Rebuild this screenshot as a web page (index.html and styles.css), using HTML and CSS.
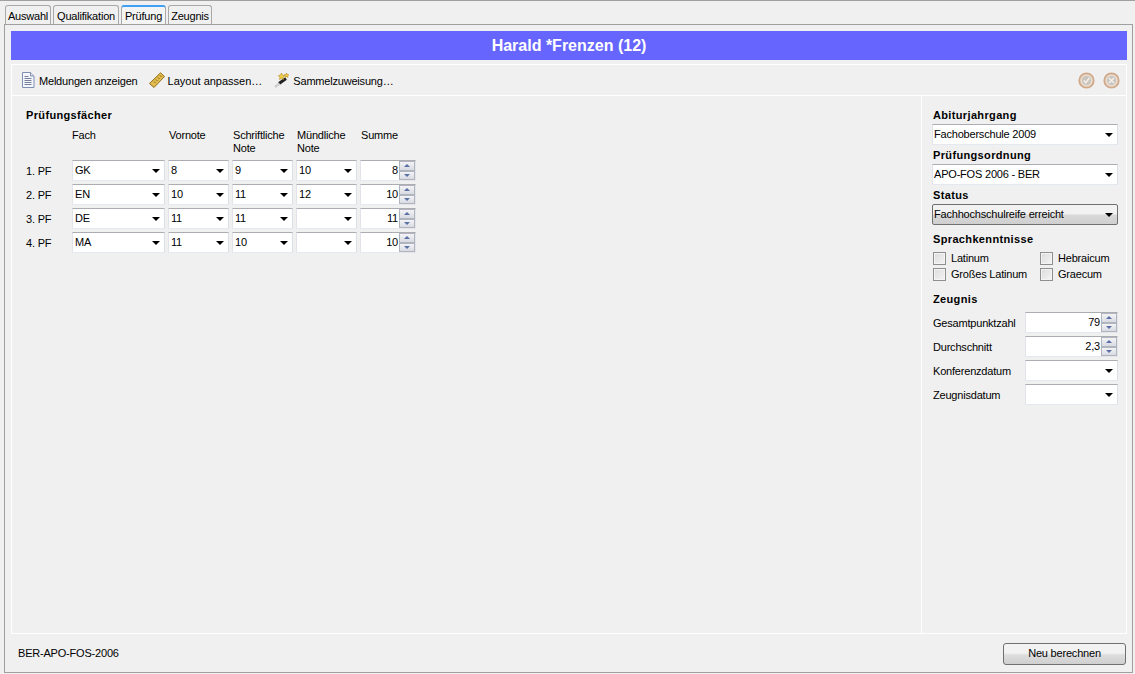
FILE: index.html
```html
<!DOCTYPE html>
<html lang="de">
<head>
<meta charset="utf-8">
<title>Prüfung</title>
<link rel="stylesheet" href="styles.css">
</head>
<body>
<nav class="tabs">
  <div class="tab tab-a">Auswahl</div>
  <div class="tab tab-q">Qualifikation</div>
  <div class="tab tab-p active">Prüfung</div>
  <div class="tab tab-z">Zeugnis</div>
</nav>
<div class="panel">
  <h1 class="title">Harald *Frenzen (12)</h1>
  <div class="main">
    <div class="toolbar">
      <div class="tool tool-m">
        <svg width="14" height="16" viewBox="0 0 14 16"><path d="M1.500.5h8l3.500 3.500v11.500h-11.500z" fill="#f4f6fb" stroke="#7f8fb4"/><path d="M9.500.5v3.500h3.500" fill="#dfe5f2" stroke="#7f8fb4"/><path d="M3.500 6.500h7M3.500 8.500h7M3.500 10.500h7M3.500 12.500h7M3.500 4.500h4" stroke="#76809a"/></svg>
        <span>Meldungen anzeigen</span>
      </div>
      <div class="tool tool-l">
        <svg width="16" height="16" viewBox="0 0 16 16"><path d="M11.500.8l4 3.700-10.500 11-4.500-4z" fill="#e2bd4e" stroke="#8f6d1c" stroke-linejoin="round"/><path d="M11 3.500l1.500 1.500M9 5.500l1.500 1.500M7 7.500l1.500 1.500M5 9.500l1.500 1.500" stroke="#7c5d14"/></svg>
        <span>Layout anpassen…</span>
      </div>
      <div class="tool tool-s">
        <svg width="15" height="16" viewBox="0 0 15 16"><path d="M5 11.500L12 6.500" stroke="#222" stroke-width="3"/><path d="M1 15l4.500-3.500" stroke="#cfcfcf" stroke-width="2.600"/><path d="M7.500 1l1 2.200 2.200.4-1.600 1.600.4 2.300-2-1.100-2 1.100.4-2.300L4.300 3.600l2.200-.4zM12.500 1l.8 1.500 1.500.3-1.100 1.100.2 1.500-1.400-.7-1.400.7.200-1.500-1.100-1.100 1.500-.3z" fill="#f2cf45" stroke="#b48a1d" stroke-width=".6"/></svg>
        <span>Sammelzuweisung…</span>
      </div>
      <div class="round-icons">
        <svg width="17" height="17" viewBox="0 0 17 17"><circle cx="8.500" cy="8.500" r="7.200" fill="#e9dccf" stroke="#cfa98a" stroke-width="1.800"/><circle cx="8.500" cy="8.500" r="4.500" fill="#c9c4be"/><path d="M5.800 8.500l2 2.300 3.500-4.800" fill="none" stroke="#f2eee9" stroke-width="1.600"/></svg>
        <svg width="17" height="17" viewBox="0 0 17 17"><circle cx="8.500" cy="8.500" r="7.200" fill="#e9dccf" stroke="#cfa98a" stroke-width="1.800"/><circle cx="8.500" cy="8.500" r="4.500" fill="#c9c4be"/><path d="M6 6l5 5M11 6l-5 5" stroke="#f2eee9" stroke-width="1.700"/></svg>
      </div>
    </div>
    <div class="content">
      <section class="subjects">
        <h2 class="heading">Prüfungsfächer</h2>
        <div class="grid">
          <div class="head"></div>
          <div class="head head-first">Fach</div>
          <div class="head">Vornote</div>
          <div class="head">Schriftliche<br>Note</div>
          <div class="head">Mündliche<br>Note</div>
          <div class="head">Summe</div>

          <div class="row-label">1. PF</div>
          <div class="combo">GK</div><div class="combo">8</div><div class="combo">9</div><div class="combo">10</div>
          <div class="spin"><div class="spin-value">8</div><div class="spin-btns"><i class="up"></i><i class="down"></i></div></div>

          <div class="row-label">2. PF</div>
          <div class="combo">EN</div><div class="combo">10</div><div class="combo">11</div><div class="combo">12</div>
          <div class="spin"><div class="spin-value">10</div><div class="spin-btns"><i class="up"></i><i class="down"></i></div></div>

          <div class="row-label">3. PF</div>
          <div class="combo">DE</div><div class="combo">11</div><div class="combo">11</div><div class="combo"></div>
          <div class="spin"><div class="spin-value">11</div><div class="spin-btns"><i class="up"></i><i class="down"></i></div></div>

          <div class="row-label">4. PF</div>
          <div class="combo">MA</div><div class="combo">11</div><div class="combo">10</div><div class="combo"></div>
          <div class="spin"><div class="spin-value">10</div><div class="spin-btns"><i class="up"></i><i class="down"></i></div></div>
        </div>
      </section>
      <aside class="side">
        <h2 class="heading">Abiturjahrgang</h2>
        <div class="combo">Fachoberschule 2009</div>
        <h2 class="heading">Prüfungsordnung</h2>
        <div class="combo">APO-FOS 2006 - BER</div>
        <h2 class="heading">Status</h2>
        <div class="combo combo-btn">Fachhochschulreife erreicht</div>
        <h2 class="heading heading-lang">Sprachkenntnisse</h2>
        <div class="checks">
          <label class="check"><i class="box"></i>Latinum</label>
          <label class="check"><i class="box"></i>Hebraicum</label>
          <label class="check"><i class="box"></i>Großes Latinum</label>
          <label class="check"><i class="box"></i>Graecum</label>
        </div>
        <h2 class="heading heading-zeugnis">Zeugnis</h2>
        <div class="form">
          <div>Gesamtpunktzahl</div>
          <div class="spin"><div class="spin-value">79</div><div class="spin-btns"><i class="up"></i><i class="down"></i></div></div>
          <div>Durchschnitt</div>
          <div class="spin"><div class="spin-value">2,3</div><div class="spin-btns"><i class="up"></i><i class="down"></i></div></div>
          <div>Konferenzdatum</div>
          <div class="combo"></div>
          <div>Zeugnisdatum</div>
          <div class="combo"></div>
        </div>
      </aside>
    </div>
  </div>
  <footer class="footer">
    <span>BER-APO-FOS-2006</span>
    <button class="button" type="button">Neu berechnen</button>
  </footer>
</div>
</body>
</html>
```
FILE: styles.css
```css
* { box-sizing: border-box; }
html, body { margin: 0; height: 100%; }
body {
  width: 1135px;
  height: 674px;
  overflow: hidden;
  background: #f0f0f0;
  border-top: 1px solid #a0a0a0;
  padding: 4px 2px 1px 4px;
  font: 11px/13px "Liberation Sans", Arial, sans-serif;
  letter-spacing: -0.2px;
  color: #000;
  display: flex;
  flex-direction: column;
}
.tabs { display: flex; height: 19px; padding-left: 1px; gap: 2px; }
.tab {
  border: 1px solid #a9a9a9;
  border-bottom: 0;
  border-radius: 3px 3px 0 0;
  background: #f0f0f0;
  text-align: center;
  padding-top: 2px;
  line-height: 17px;
  white-space: nowrap;
}
.tab-a { width: 46px; }
.tab-q { width: 66px; }
.tab-p { width: 45px; }
.tab-z { width: 44px; }
.active { background: #f4f4f4; border-top: 2px solid #3fa0f5; border-color: #3fa0f5 #a9a9a9 #a9a9a9; padding-top: 1px; }
.panel {
  flex: 1;
  border: 1px solid #a0a0a0;
  padding: 6px 5px 0 6px;
  display: flex;
  flex-direction: column;
}
.title {
  margin: 0;
  height: 29px;
  flex: none;
  background: #6666ff;
  color: #fff;
  font: bold 16px/29px "Liberation Sans", sans-serif;
  letter-spacing: 0;
  text-align: center;
}
.main {
  margin-top: 4px;
  flex: 1;
  border: 1px solid #fff;
  display: flex;
  flex-direction: column;
  min-height: 0;
}
.toolbar {
  height: 31px;
  flex: none;
  border-bottom: 1px solid #fff;
  display: flex;
  align-items: center;
  padding-left: 9px;
}
.tool { display: flex; align-items: center; gap: 4px; }
.tool span { padding-top: 2px; }
.tool-l { margin-left: 11px; gap: 3px; letter-spacing: 0; }
.tool-s { margin-left: 12px; gap: 4px; }
.round-icons { margin-left: auto; margin-right: 6px; display: flex; gap: 8px; }
.content { flex: 1; display: flex; min-height: 0; }
.subjects { flex: 1; padding: 12px 0 0 14px; border-right: 1px solid #fff; }
.heading {
  margin: 0;
  font-size: 11px;
  font-weight: bold;
  line-height: 15px;
  letter-spacing: 0.35px;
}
.grid {
  display: grid;
  grid-template-columns: 43px 93px 61px 61px 61px 56px;
  grid-auto-rows: 21px;
  grid-template-rows: 29px;
  column-gap: 3px;
  row-gap: 3px;
  margin-top: 5px;
}
.grid .combo { padding-left: 2px; }
.head { padding: 1px 0 0 1px; margin-bottom: -3px; }
.head-first { padding-left: 0; }
.row-label { align-self: center; padding-top: 1px; }
.combo {
  position: relative;
  height: 21px;
  background: #fff;
  border: 1px solid;
  border-color: #abadb3 #dbdfe6 #e3e9ef #e2e3ea;
  line-height: 18px;
  padding-left: 1px;
  white-space: nowrap;
}
.combo::after {
  content: "";
  position: absolute;
  right: 4px;
  top: 8px;
  border: 4px solid transparent;
  border-top: 4px solid #000;
  border-bottom: 0;
}
.combo-btn {
  border: 1px solid #707070;
  border-radius: 2px;
  background: linear-gradient(#f2f2f2 0 45%, #d8d8d8 55%, #cfcfcf);
}
.spin { display: flex; height: 21px; }
.spin-value {
  flex: 1;
  background: #fff;
  border: 1px solid;
  border-color: #abadb3 #dbdfe6 #e3e9ef #e2e3ea;
  border-right: 0;
  text-align: right;
  padding-right: 1px;
  line-height: 18px;
}
.spin-btns { width: 17px; display: flex; flex-direction: column; background: #fff; border: 1px solid #e3e5ea; border-left: 0; border-top-color: #abadb3; }
.spin-btns i {
  flex: 1;
  position: relative;
  border: 1px solid #b0b4be;
  background: linear-gradient(#f4f4f6, #d8dbe2);
}
.spin-btns i::after {
  content: "";
  position: absolute;
  left: 4px;
  top: 2px;
  border: 3px solid transparent;
  border-top: 0;
  border-bottom: 3px solid #5a6ea8;
}
.spin-btns .down::after { border-bottom: 0; border-top: 3px solid #5a6ea8; }
.side { width: 204px; flex: none; padding: 12px 8px 0 10px; }
.side .heading { margin-left: 1px; margin-bottom: 1px; }
.side .combo + .heading { margin-top: 3px; }
.side .combo + .heading-lang { margin-top: 7px; margin-bottom: 3px; }
.checks { display: grid; grid-template-columns: 107px 1fr; grid-auto-rows: 16px; }
.check { display: flex; align-items: center; gap: 5px; padding-left: 1px; white-space: nowrap; }
.box {
  width: 13px;
  height: 13px;
  border: 1px solid #8e8f8f;
  background: linear-gradient(135deg, #dcdcdc, #f4f4f4);
  box-shadow: inset 0 0 0 1px #f4f4f4;
}
.side .heading-zeugnis { margin-top: 10px; margin-bottom: 5px; }
.form {
  display: grid;
  grid-template-columns: 93px 93px;
  grid-auto-rows: 21px;
  row-gap: 3px;
  align-items: center;
}
.form > div:nth-child(odd) { padding: 1px 0 0 1px; }
.footer {
  height: 38px;
  flex: none;
  display: flex;
  align-items: center;
  justify-content: space-between;
  padding-left: 7px;
}
.button {
  width: 123px;
  height: 22px;
  margin-top: 1px;
  margin-right: 1px;
  border: 1px solid #707070;
  border-radius: 3px;
  background: linear-gradient(#f2f2f2 0 45%, #dddddd 55%, #cfcfcf);
  font: inherit;
  letter-spacing: inherit;
  padding: 0;
  color: #000;
}
```
